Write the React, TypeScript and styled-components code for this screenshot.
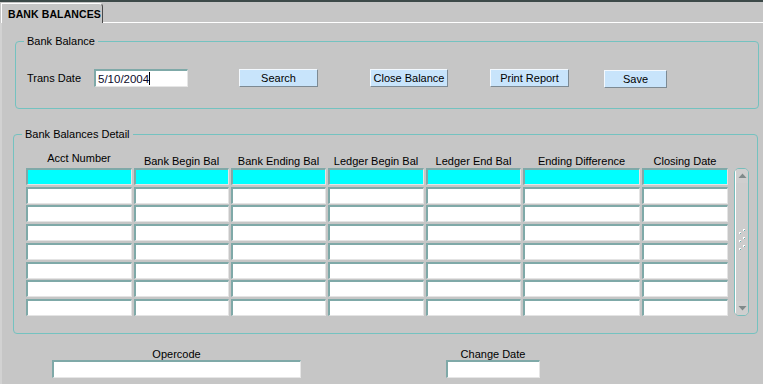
import styled, { createGlobalStyle } from "styled-components";

const GlobalStyle = createGlobalStyle`
  html, body {
    margin: 0;
    padding: 0;
    background: #c6c6c6;
  }
  body {
    font-family: "Liberation Sans", Arial, sans-serif;
    font-size: 11px;
    color: #000;
  }
`;

const Page = styled.div`
  width: 763px;
  height: 384px;
  overflow: hidden;
  background: #c6c6c6;
  border-top: 2px solid #3d4a49;
  box-sizing: border-box;
`;

const TabStrip = styled.div`
  display: flex;
  height: 21px;
  padding-top: 1px;
  box-sizing: border-box;
`;

const Tab = styled.div`
  display: flex;
  align-items: center;
  width: 102px;
  margin-left: 1px;
  padding-left: 6px;
  box-sizing: border-box;
  border-top: 1px solid #fff;
  border-left: 1px solid #fff;
  border-right: 1px solid #4a4a4a;
  border-top-right-radius: 4px;
  font-size: 10.5px;
  font-weight: bold;
  letter-spacing: 0.1px;
`;

const TabRest = styled.div`
  flex: 1;
  align-self: flex-end;
  border-bottom: 1px solid #fff;
`;

const Body = styled.div`
  display: flex;
  flex-direction: column;
  border-left: 2px solid #d2d2d2;
  height: 361px;
  box-sizing: border-box;
`;

const Group = styled.fieldset<{ $left: number; $right: number; $top: number }>`
  margin: ${(p) => p.$top}px ${(p) => p.$right}px 0 ${(p) => p.$left}px;
  padding: 0;
  border: 1px solid #74c2c0;
  border-radius: 4px;
  min-width: 0;
`;

const Legend = styled.legend`
  margin-left: 8px;
  padding: 0 3px;
  font-size: 11px;
  line-height: 14px;
`;

const FilterRow = styled.div`
  display: flex;
  align-items: center;
  height: 18px;
  margin: 21px 0 21px 11px;
`;

const Label = styled.span`
  width: 67px;
`;

const Field = styled.div<{ $width: number }>`
  width: ${(p) => p.$width}px;
  height: 18px;
  box-sizing: border-box;
  background: #fff;
  border-top: 2px solid #7fa9a8;
  border-left: 2px solid #7fa9a8;
  border-right: 1px solid #e6e6e6;
  border-bottom: 1px solid #e6e6e6;
  display: flex;
  align-items: center;
  padding-left: 2px;
  font-size: 11.5px;
  color: #0b0b2a;
`;

const Caret = styled.span`
  display: inline-block;
  width: 1px;
  height: 13px;
  background: #000;
`;

const Button = styled.button<{ $width: number; $offset: number; $drop?: number }>`
  width: ${(p) => p.$width}px;
  height: 18px;
  margin-left: ${(p) => p.$offset}px;
  margin-top: ${(p) => (p.$drop ?? 0) * 2}px;
  padding: 0;
  background: #c8e4fb;
  border-top: 1px solid #f4f9fe;
  border-left: 1px solid #f4f9fe;
  border-right: 1px solid #7d8a93;
  border-bottom: 1px solid #7d8a93;
  font-family: "Liberation Sans", Arial, sans-serif;
  font-size: 11px;
  color: #000;
`;

const cols = [106, 95, 95, 96, 95, 117, 86];
const headers = [
  "Acct Number",
  "Bank Begin Bal",
  "Bank Ending Bal",
  "Ledger Begin Bal",
  "Ledger End Bal",
  "Ending Difference",
  "Closing Date",
];

const DetailBody = styled.div`
  display: flex;
  padding: 0 0 17px 12px;
`;

const Table = styled.div`
  display: grid;
  grid-template-columns: ${cols.map((c) => `${c}px`).join(" ")};
  column-gap: 2px;
`;

const HeaderRow = styled.div`
  display: contents;
`;

const Header = styled.div<{ $raise?: boolean }>`
  height: 27px;
  padding-bottom: ${(p) => (p.$raise ? 4 : 1)}px;
  box-sizing: border-box;
  display: flex;
  align-items: flex-end;
  justify-content: center;
  font-size: 11px;
`;

const Rows = styled.div`
  grid-column: 1 / -1;
  display: grid;
  grid-template-columns: ${cols.map((c) => `${c}px`).join(" ")};
  grid-auto-rows: 17px;
  column-gap: 2px;
  row-gap: 1.7px;
`;

const Cell = styled.div<{ $current?: boolean }>`
  box-sizing: border-box;
  background: ${(p) => (p.$current ? "#00ffff" : "#fff")};
  border-top: 2px solid #7fa9a8;
  border-left: 2px solid #7fa9a8;
  border-right: 1px solid #e4e4e4;
  border-bottom: 1px solid #e4e4e4;
`;

const ScrollBar = styled.div`
  margin: 27px 0 0 6px;
  width: 15px;
  height: 148px;
  box-sizing: border-box;
  border: 1px solid #78bdbb;
  border-radius: 5px;
  background: #cdcdcd;
  display: flex;
  flex-direction: column;
  align-items: center;
  justify-content: space-between;
  overflow: hidden;
`;

const Arrow = styled.div`
  width: 13px;
  height: 14px;
  display: flex;
  align-items: center;
  justify-content: center;
  background: #cfcfcf;
  border-left: 1px solid #fff;
`;

const Track = styled.div`
  flex: 1;
  width: 13px;
  border-left: 1px solid #fff;
  display: flex;
  align-items: center;
  justify-content: center;
`;

const Footer = styled.div`
  display: flex;
  margin: 14px 0 0 50px;
`;

const FooterField = styled.div<{ $gap: number }>`
  display: flex;
  flex-direction: column;
  align-items: center;
  gap: 0;
  margin-right: ${(p) => p.$gap}px;
`;

const rows = Array.from({ length: 8 }, (_, i) => i);

export default function App() {
  return (
    <Page>
      <GlobalStyle />
      <TabStrip>
        <Tab>BANK BALANCES</Tab>
        <TabRest />
      </TabStrip>
      <Body>
        <Group $left={13} $right={4} $top={11}>
          <Legend>Bank Balance</Legend>
          <FilterRow>
            <Label>Trans Date</Label>
            <Field $width={94}>
              5/10/2004
              <Caret />
            </Field>
            <Button $width={79} $offset={51}>Search</Button>
            <Button $width={78} $offset={52}>Close Balance</Button>
            <Button $width={79} $offset={42}>Print Report</Button>
            <Button $width={63} $offset={35} $drop={1}>Save</Button>
          </FilterRow>
        </Group>
        <Group $left={11} $right={5} $top={18}>
          <Legend>Bank Balances Detail</Legend>
          <DetailBody>
            <Table>
              <HeaderRow>
                {headers.map((h, i) => (
                  <Header key={h} $raise={i === 0}>
                    {h}
                  </Header>
                ))}
              </HeaderRow>
              <Rows>
                {rows.map((r) =>
                  cols.map((_, c) => <Cell key={`${r}-${c}`} $current={r === 0} />)
                )}
              </Rows>
            </Table>
            <ScrollBar>
              <Arrow>
                <svg width="9" height="6" viewBox="0 0 9 6">
                  <path d="M4.5 0.5 L8.5 5 L0.5 5 Z" fill="#808a8a" />
                </svg>
              </Arrow>
              <Track>
                <svg width="8" height="26" viewBox="0 0 8 26">
                  {[0, 8, 16].map((y) => (
                    <g key={y}>
                      <rect x="5" y={y} width="2" height="2" fill="#fff" />
                      <rect x="6" y={y + 1} width="1" height="1" fill="#6aa" />
                      <rect x="1" y={y + 3} width="2" height="2" fill="#fff" />
                      <rect x="2" y={y + 4} width="1" height="1" fill="#6aa" />
                    </g>
                  ))}
                </svg>
              </Track>
              <Arrow>
                <svg width="9" height="6" viewBox="0 0 9 6">
                  <path d="M0.5 1 L8.5 1 L4.5 5.5 Z" fill="#808a8a" />
                </svg>
              </Arrow>
            </ScrollBar>
          </DetailBody>
        </Group>
        <Footer>
          <FooterField $gap={145}>
            Opercode
            <Field $width={249} />
          </FooterField>
          <FooterField $gap={0}>
            Change Date
            <Field $width={94} />
          </FooterField>
        </Footer>
      </Body>
    </Page>
  );
}
